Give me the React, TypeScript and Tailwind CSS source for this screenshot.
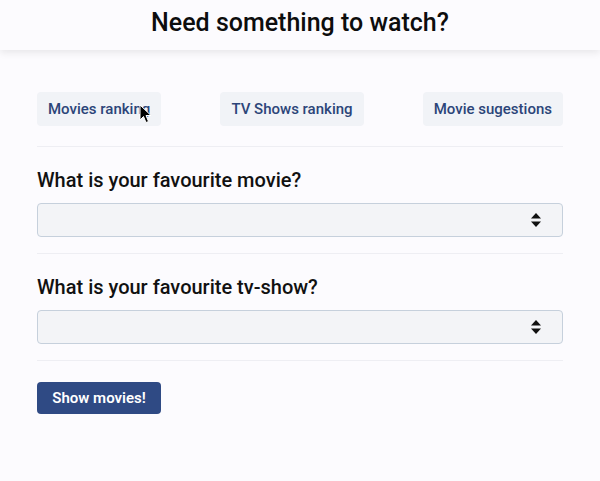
import React from "react";

const navItems = ["Movies ranking", "TV Shows ranking", "Movie sugestions"];

function SelectArrows() {
  return (
    <svg width="12" height="16" viewBox="0 0 12 16" className="absolute right-[20px] top-1/2 -translate-y-1/2">
      <path d="M6 1 L11 6.5 H1 Z" fill="#111" />
      <path d="M6 15 L11 9.5 H1 Z" fill="#111" />
    </svg>
  );
}

function Question({ label }: { label: string }) {
  return (
    <div>
      <div className="h-px bg-[#eeeef3]" />
      <h2 className="mt-[21px] text-[20px] leading-6 font-medium text-[#111]">{label}</h2>
      <div className="relative mt-[11px] h-[34px] rounded-[4px] border border-[#c6d0dc] bg-[#f3f4f7]">
        <SelectArrows />
      </div>
      <div className="h-[16px]" />
    </div>
  );
}

export default function App() {
  return (
    <div
      className="relative min-h-[481px] bg-[#fcfbfe]"
      style={{ fontFamily: "Roboto, 'Liberation Sans', sans-serif" }}
    >
      {/* Header */}
      <header className="h-[50px] flex items-center justify-center bg-[#fcfbfe] shadow-[0_3px_7px_rgba(0,0,0,0.08)]">
        <h1 className="text-[25px] font-medium text-[#0d0d0d] -mt-[4px]">Need something to watch?</h1>
      </header>

      <main className="px-[37px]">
        {/* Nav */}
        <nav className="mt-[42px] flex justify-between">
          {navItems.map((item) => (
            <button
              key={item}
              className="h-[34px] px-[11px] rounded-[4px] bg-[#f1f3f7] text-[15px] font-medium text-[#2c4579]"
            >
              {item}
            </button>
          ))}
        </nav>
        <div className="h-[20px]" />

        <Question label="What is your favourite movie?" />
        <Question label="What is your favourite tv-show?" />

        <div className="h-px bg-[#eeeef3]" />
        <button className="mt-[21px] h-[32px] w-[124px] rounded-[4px] bg-[#2f4a84] text-[15px] font-semibold text-white">
          Show movies!
        </button>
      </main>

      {/* Mouse cursor */}
      <svg width="14" height="20" viewBox="0 0 14 20" className="absolute left-[139px] top-[104px]">
        <path d="M1 1 L1 16 L4.5 12.5 L7 18.5 L9.5 17.5 L7 11.5 L12 11.5 Z" fill="#000" stroke="#fff" strokeWidth="1" />
      </svg>
    </div>
  );
}
